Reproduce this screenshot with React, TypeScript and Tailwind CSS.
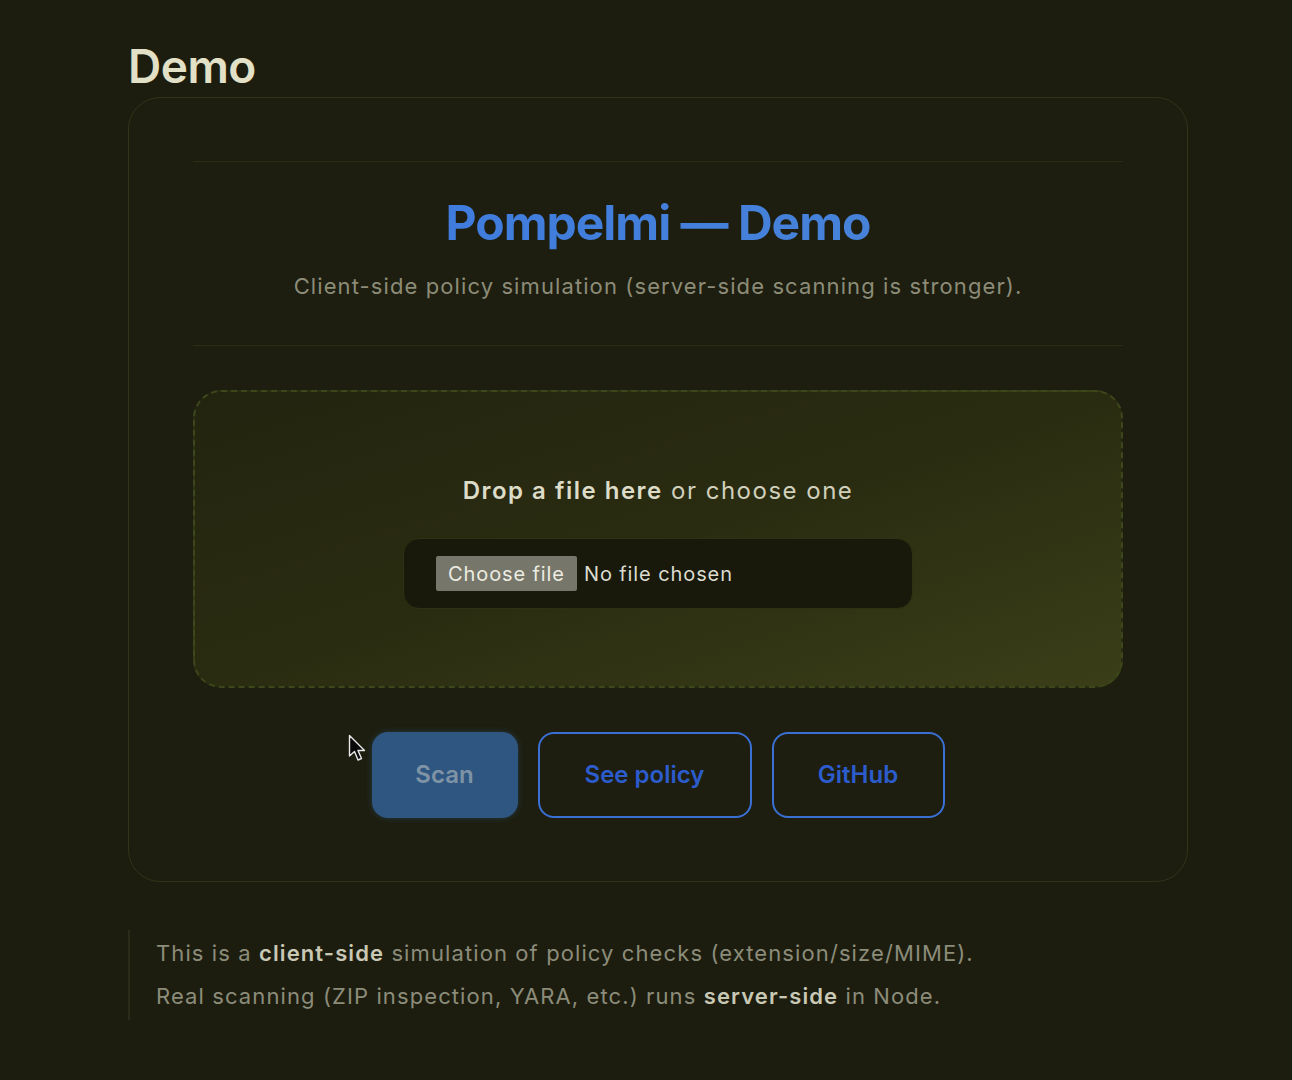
import React from "react";

function Cursor() {
  return (
    <svg width="20" height="30" viewBox="0 0 20 30" className="absolute left-[-24px] top-[2px]">
      <path
        d="M1.5 1.5 L1.5 22 L6.5 17.5 L10 26 L13.5 24.5 L10 16.5 L16.5 16.5 Z"
        fill="#0a0a0a"
        stroke="#e8e8e8"
        strokeWidth="1.4"
        strokeLinejoin="round"
      />
    </svg>
  );
}

export default function App() {
  return (
    <div
      className="min-h-[1080px] w-full bg-[#1c1d0f] text-[#d8d8c4]"
      style={{ fontFamily: "Inter, 'Noto Sans', sans-serif" }}
    >
      <div className="ml-[128px] w-[1060px] pt-[38px]">
        <h2 className="text-[46px] leading-[56px] font-semibold tracking-[-0.5px] text-[#e2e0c6]">Demo</h2>

        {/* Demo card */}
        <div className="mt-[3px] rounded-[32px] border border-[#30351a] bg-[#1d1e0f] px-[64px] pt-[63px] pb-[63px]">
          <div className="h-px bg-[#2b2e15]" />
          <div className="pt-[31px] pb-[44px] text-center">
            <h1 className="text-[48px] leading-[60px] font-bold tracking-[-1px] text-transparent bg-clip-text bg-gradient-to-r from-[#3a78e0] to-[#4c86d6]">
              Pompelmi — Demo
            </h1>
            <p className="mt-[18px] text-[22px] leading-[30px] tracking-[1.1px] text-[#8c8c78]">
              Client-side policy simulation (server-side scanning is stronger).
            </p>
          </div>
          <div className="h-px bg-[#2b2e15]" />

          {/* Dropzone */}
          <div className="mt-[44px] h-[298px] rounded-[28px] border-2 border-dashed border-[#3c481b] bg-gradient-to-br from-[#23240f] via-[#2a2c11] to-[#3a3f18] flex flex-col items-center justify-center pt-[6px]">
            <p className="text-[24px] leading-[32px] tracking-[1.5px] text-[#d0d0bc]">
              <strong className="font-semibold text-[#dcdcc8]">Drop a file here</strong> or choose one
            </p>
            <div className="mt-[31px] w-[510px] h-[71px] rounded-[16px] border border-[#2c3213] bg-[#18190b] flex items-center px-[32px]">
              <span className="h-[35px] px-[12px] flex items-center bg-[#76766a] text-[20px] tracking-[0.9px] text-[#ecece2] rounded-[2px]">
                Choose file
              </span>
              <span className="ml-[7px] text-[20px] tracking-[0.9px] text-[#dcdcd0]">No file chosen</span>
            </div>
          </div>

          {/* Actions */}
          <div className="mt-[44px] flex justify-center gap-[20px]">
            <div className="relative">
              <Cursor />
              <button className="w-[146px] h-[86px] rounded-[16px] bg-[#2e5680] text-[24px] font-semibold text-[#7f93a6] shadow-[0_0_6px_rgba(60,110,170,0.35)]">
                Scan
              </button>
            </div>
            <button className="w-[214px] h-[86px] rounded-[16px] border-2 border-[#3a6fd4] text-[24px] font-semibold text-[#2c5ccc]">
              See policy
            </button>
            <button className="w-[173px] h-[86px] rounded-[16px] border-2 border-[#3a6fd4] text-[24px] font-semibold text-[#2c5ccc]">
              GitHub
            </button>
          </div>
        </div>

        {/* Note */}
        <div className="mt-[48px] border-l-2 border-[#2a2b18] pl-[26px] py-[2px] text-[22px] leading-[43px] tracking-[1.1px] text-[#8c8c7a]">
          <p>
            This is a <strong className="font-semibold text-[#c8c8b4]">client-side</strong> simulation of policy checks (extension/size/MIME).
          </p>
          <p>
            Real scanning (ZIP inspection, YARA, etc.) runs <strong className="font-semibold text-[#c8c8b4]">server-side</strong> in Node.
          </p>
        </div>
      </div>
    </div>
  );
}
